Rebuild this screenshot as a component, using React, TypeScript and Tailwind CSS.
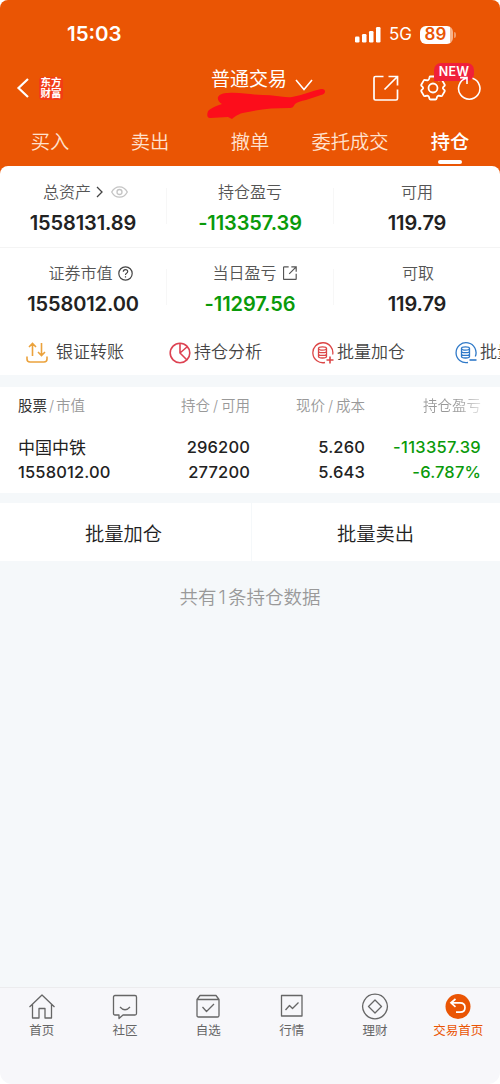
import React from 'react'

const tabs = ['买入', '卖出', '撤单', '委托成交', '持仓']

function ExportIcon({ size, stroke }: { size: number; stroke: number }) {
  return (
    <svg width={size} height={size} viewBox="0 0 26 26" fill="none" stroke="currentColor" strokeWidth={stroke}>
      <path d="M10.500 1.500H2.500Q1 1.500 1 3v20.500q0 1.500 1.500 1.500h20.500q1.500 0 1.500-1.500V14.500" />
      <path d="M11.500 14.500L24.500 1.500M15.500 1.500h9v9" />
    </svg>
  )
}

function StatusBar() {
  return (
    <div className="flex h-[66px] items-center pl-[67px] pt-[3px]">
      <span className="w-[288px] text-[20.500px] font-semibold leading-none">15:03</span>
      <svg width="26" height="16" viewBox="0 0 26 16" fill="white">
        <rect x="0" y="9.500" width="4.500" height="6" rx="1.200" />
        <rect x="7" y="7" width="4.500" height="8.500" rx="1.200" />
        <rect x="14" y="4" width="4.500" height="11.500" rx="1.200" />
        <rect x="21" y="0" width="4.500" height="15.500" rx="1.200" />
      </svg>
      <span className="ml-2 w-6 text-[17px] leading-none">5G</span>
      <span className="ml-[7px] flex h-[18px] w-[33px] items-center justify-center rounded-[6px] bg-linear-to-r from-white from-90% to-[#f7b48c] to-90% pr-0.5 text-[17px] font-semibold leading-none text-[#ea5504]">
        89
      </span>
      <span className="ml-px h-[6px] w-[2px] rounded-r-full bg-[#f29a68]" />
    </div>
  )
}

function TitleBar() {
  return (
    <div className="relative flex h-11 items-center">
      {/* hand drawn marker under the title */}
      <svg className="absolute left-[205px] top-[20px]" width="122" height="35" viewBox="0 0 122 35" fill="#fc0d1b">
        <path d="M13 11C15 8 18 7 23 7C35 6 46 9 58 9C69 9 79 12 87 11C98 9 107 5 116 3Q120 2.500 120 5.500Q120 8 116 9L101 14C96 15 92 16 90 18C88 21 88 22 84 22C69 22 56 23 43 26C35 27 32 29 27 33L23 31L5 32Q1.500 32 2.500 27C3 23 9 21 17 18Q12 15 13 11Z" />
      </svg>
      <svg className="ml-4" width="13" height="20" viewBox="0 0 13 20" fill="none" stroke="white" strokeWidth="2.200">
        <path d="M12 1L2.500 10l9.500 9" />
      </svg>
      <div className="ml-[10px] flex h-[23px] w-[24px] flex-col items-center justify-center rounded-[4px] bg-[#f33c16] text-[10.500px] font-bold leading-[11.500px]">
        <span>东方</span>
        <span>财富</span>
      </div>
      <div className="relative mb-[18px] ml-[148px] flex items-center">
        <span className="w-[77px] whitespace-nowrap text-[19px] leading-none">普通交易</span>
        <svg className="ml-[7px] mt-3" width="18" height="12" viewBox="0 0 18 12" fill="none" stroke="white" strokeWidth="1.600">
          <path d="M1 1l8 9.500L17 1" />
        </svg>
      </div>
      <div className="ml-[60px]">
        <ExportIcon size={26} stroke={1.7} />
      </div>
      <div className="relative ml-[21px]">
        <svg width="26" height="26" viewBox="0 0 26 26" fill="none" stroke="white" strokeWidth="1.800" strokeLinejoin="round">
          <path d="M10.500 1.500h5q.8 0 1 .8l.5 1.700q.4 1.100 1.500 1.400l2.300-.4q1-.2 1.500.6l2.300 3.900q.4.700-.1 1.400l-1.300 1.300q-.6.800 0 1.600l1.300 1.300q.5.700.1 1.400l-2.300 3.900q-.5.800-1.500.6l-2.300-.4q-1.100.3-1.500 1.400l-.5 1.700q-.2.800-1 .8h-5q-.8 0-1-.8L9 22q-.4-1.100-1.500-1.400l-2.300.4q-1 .2-1.500-.6l-2.300-3.900q-.4-.7.100-1.400l1.300-1.300q.6-.8 0-1.600l-1.300-1.300q-.5-.7-.1-1.400l2.300-3.900q.5-.8 1.500-.6l2.300.4Q8.600 5.100 9 4l.5-1.700q.2-.8 1-.8z" />
          <circle cx="13" cy="13" r="4.500" />
        </svg>
        <span className="absolute -top-[12px] left-[14px] flex h-[18px] w-[40px] items-center justify-center rounded-[7px] rounded-bl-none bg-[#f0203a] pt-px text-[12.500px] font-semibold leading-none tracking-[0.300px]">
          NEW
        </span>
      </div>
      <svg className="relative ml-[11px]" width="24" height="26" viewBox="0 0 24 26" fill="none" stroke="white" strokeWidth="1.600">
        <path d="M15.500 3.300A10.700 10.700 0 1 1 9 3.300M3 2.600h7v6.500" />
      </svg>
    </div>
  )
}

type StatProps = { label: string; value: string; icon?: React.ReactNode; green?: boolean; shift?: string }

function Stat({ label, value, icon, green, shift = '' }: StatProps) {
  return (
    <div className="flex flex-1 flex-col items-center">
      <div className={`flex h-6 items-center whitespace-nowrap text-[16px] font-[350] text-[#555] ${shift}`}>
        {label}
        {icon}
      </div>
      <div className={`mt-[7px] h-6 text-[20px] font-semibold leading-6 tracking-[-0.100px] ${green ? 'text-[#0a9a0a]' : 'text-[#222]'}`}>
        {value}
      </div>
    </div>
  )
}

function Divider() {
  return <div className="mt-2 h-9 w-px bg-[#f7f7f7]" />
}

function BatchIcon({ minus }: { minus?: boolean }) {
  return (
    <svg width="22" height="22" viewBox="0 0 22 22" fill="none" stroke="currentColor" strokeWidth="1.300">
      <path d={minus ? 'M13 20.500A10 10 0 1 1 20.300 14.500' : 'M13 20.500A10 10 0 1 1 20.700 12.500'} />
      <ellipse cx="10.500" cy="6.500" rx="4" ry="1.600" />
      <path d="M6.500 6.500v8c0 2 8 2 8 0v-8M6.500 9.200c0 2 8 2 8 0M6.500 11.900c0 2 8 2 8 0" />
      <path d={minus ? 'M14.500 18h7' : 'M14.500 18h7M18 14.500v7'} strokeWidth="1.600" />
    </svg>
  )
}

function Shortcuts() {
  const item = 'flex w-[143px] shrink-0 items-center gap-[3px] whitespace-nowrap'
  return (
    <div className="flex h-[46px] items-center overflow-hidden pl-[26px] pt-0.5 text-[17px] font-[350] text-[#444]">
      <div className={item}>
        <svg className="mr-[5px]" width="22" height="22" viewBox="0 0 22 22" fill="none" stroke="#eba23c" strokeWidth="1.600">
          <path d="M1 14.500v2.500q0 3 3 3h14q3 0 3-3v-2.500M6.500 14V1.500M3 5l3.500-3.500L10 5M15.500 1v12.500M12 10l3.500 3.500L19 10" />
        </svg>
        银证转账
      </div>
      <div className={item}>
        <svg className="text-[#dd4252]" width="22" height="22" viewBox="0 0 22 22" fill="none" stroke="currentColor" strokeWidth="1.600">
          <circle cx="11" cy="11" r="9.800" />
          <path d="M11 1v10l7 7M11 11l7.500-6.500" />
        </svg>
        持仓分析
      </div>
      <div className={item}>
        <span className="text-[#dc4747]">
          <BatchIcon />
        </span>
        批量加仓
      </div>
      <div className={item}>
        <span className="text-[#2f79c8]">
          <BatchIcon minus />
        </span>
        批量卖出
      </div>
    </div>
  )
}

function Holdings() {
  const row = 'grid grid-cols-[127px_105px_115px_116px] text-right'
  const numbers = 'h-[25px] text-[16.500px] font-medium leading-[25px] tracking-[0.150px] text-[#222]'
  return (
    <div className="h-[106px] bg-white pl-[18px] pt-[7px]">
      <div className={`${row} h-6 items-center whitespace-nowrap text-[14.500px] font-[350] leading-6 text-[#999]`}>
        <span className="text-left">
          <span className="font-normal text-[#333]">股票</span>
          <span className="mx-0.5">/</span>市值
        </span>
        <span>持仓<span className="mx-[3px]">/</span>可用</span>
        <span>现价<span className="mx-[3px]">/</span>成本</span>
        <span className="bg-linear-to-r from-[#999] from-80% to-[#e4e4e4] bg-clip-text text-transparent">持仓盈亏</span>
      </div>
      <div className={`${row} ${numbers} mt-[17px]`}>
        <span className="pt-px text-left text-[17px] font-normal tracking-normal">中国中铁</span>
        <span>296200</span>
        <span>5.260</span>
        <span className="tracking-[0.300px] text-[#0a9a0a]">-113357.39</span>
      </div>
      <div className={`${row} ${numbers}`}>
        <span className="text-left">1558012.00</span>
        <span>277200</span>
        <span>5.643</span>
        <span className="text-[#0a9a0a]">-6.787%</span>
      </div>
    </div>
  )
}

const navItems = [
  {
    label: '首页',
    icon: <path d="M1.500 14L14 2l12.500 12M4.500 11.500V25h6.500v-9.500h6V25h6.500V11.500" />,
  },
  {
    label: '社区',
    icon: <path d="M4 2.500h20q1.500 0 1.500 1.500v16.500q0 1.500-1.500 1.500H12l-4 3.500V22H4q-1.500 0-1.500-1.500V4q0-1.500 1.500-1.500zM9 14q5 5.500 10 0" />,
  },
  {
    label: '自选',
    icon: <path d="M3 6.500L6 2.500h16l3 4v16q0 1.500-1.500 1.500h-19Q3 24 3 22.500zM3 6.500h22M8.500 14l4 4.500 7.500-7.500" />,
  },
  {
    label: '行情',
    icon: <path d="M3.500 2.500h20.500v20.500H3.500zM7.500 17l4-4.500 3 3 6-6" />,
  },
  {
    label: '理财',
    icon: <path d="M14 1.200a12.300 12.300 0 1 0 .01 0zM14 7l6.500 6.500L14 20l-6.500-6.500z" />,
  },
]

function BottomNav() {
  return (
    <div className="flex h-[97px] rounded-b-xl border-t border-[#ececee] bg-[#f7f7fa] pt-[5px]">
      {navItems.map((n) => (
        <div key={n.label} className="flex flex-1 flex-col items-center text-[#666]">
          <svg width="28" height="28" viewBox="0 0 28 28" fill="none" stroke="currentColor" strokeWidth="1.300" strokeLinejoin="round">
            {n.icon}
          </svg>
          <span className="mt-0.5 text-[12.500px] leading-4">{n.label}</span>
        </div>
      ))}
      <div className="flex flex-1 flex-col items-center text-[#ea5504]">
        <svg width="28" height="28" viewBox="0 0 28 28" fill="none" stroke="white" strokeWidth="1.700">
          <circle cx="14" cy="13.500" r="12.500" fill="#ea5504" stroke="none" />
          <path d="M11.500 6L7 9.800l4.500 4M7 9.800h9q5 0 5 4.700t-5 4.700h-4" />
        </svg>
        <span className="mt-0.5 whitespace-nowrap text-[12.500px] leading-4">交易首页</span>
      </div>
    </div>
  )
}

export default function App() {
  return (
    <div className="bg-white font-['Inter','Noto_Sans_CJK_SC',sans-serif]">
      <div className="flex h-[1084px] w-[500px] flex-col overflow-hidden rounded-t-lg bg-[#f5f8fa]">
        <div className="bg-[#ea5504] text-white">
          <StatusBar />
          <TitleBar />
          <div className="flex h-14 text-[19.300px]">
            {tabs.map((t) => (
              <div
                key={t}
                className={`flex flex-1 flex-col items-center whitespace-nowrap pt-5 ${t === '持仓' ? 'font-medium' : 'font-[350] text-[#ffe2cf]'}`}
              >
                <span className="leading-6">{t}</span>
                {t === '持仓' && <span className="mt-1.5 h-1 w-6 rounded-full bg-white" />}
              </div>
            ))}
          </div>
        </div>
        <div className="bg-linear-to-b from-[#ea5504] from-10% to-white to-10%">
          <div className="rounded-t-lg bg-white">
            <div className="flex h-[82px] border-b border-[#f4f4f4] pt-[14px]">
              <Stat
                label="总资产"
                value="1558131.89"
                shift="pl-[5px]"
                icon={
                  <>
                    <svg className="ml-[5px]" width="7" height="12" viewBox="0 0 7 12" fill="none" stroke="#444" strokeWidth="1.300">
                      <path d="M1 1l5 5-5 5" />
                    </svg>
                    <svg className="ml-2" width="17" height="12" viewBox="0 0 17 12" fill="none" stroke="#c4c4c4" strokeWidth="1.300">
                      <path d="M.7 6Q3.500 .8 8.500 .8T16.300 6Q13.500 11.200 8.500 11.200T.7 6z" />
                      <circle cx="8.500" cy="6" r="2.500" />
                    </svg>
                  </>
                }
              />
              <Divider />
              <Stat label="持仓盈亏" value="-113357.39" green />
              <Divider />
              <Stat label="可用" value="119.79" />
            </div>
            <div className="flex h-[81px] pt-[13px]">
              <Stat
                label="证券市值"
                value="1558012.00"
                shift="pl-[15px]"
                icon={
                  <svg className="ml-[5px]" width="15" height="15" viewBox="0 0 15 15" fill="none" stroke="#444" strokeWidth="1.200">
                    <circle cx="7.500" cy="7.500" r="6.700" />
                    <path d="M5.300 5.800q0-2.200 2.200-2.200t2.200 2q0 1.100-1.200 1.700-1 .5-1 1.700M7.500 10.200v1.300" />
                  </svg>
                }
              />
              <Divider />
              <Stat
                label="当日盈亏"
                value="-11297.56"
                green
                shift="pl-[9px]"
                icon={
                  <span className="ml-1.5">
                    <ExportIcon size={14} stroke={2.2} />
                  </span>
                }
              />
              <Divider />
              <Stat label="可取" value="119.79" shift="pl-0.5" />
            </div>
            <Shortcuts />
          </div>
        </div>
        <div className="h-3 shrink-0" />
        <Holdings />
        <div className="mt-2.5 flex h-[58px] gap-px text-[19.300px] font-[350] text-[#222]">
          <div className="flex flex-1 items-center justify-center bg-white pr-1 pt-1">批量加仓</div>
          <div className="flex flex-1 items-center justify-center bg-white pr-px pt-1">批量卖出</div>
        </div>
        <div className="mt-6 text-center text-[18.500px] font-[350] leading-6 text-[#999]">
          共有<span className="mx-[2px]">1</span>条持仓数据
        </div>
        <div className="mt-auto bg-white">
          <BottomNav />
        </div>
      </div>
    </div>
  )
}
